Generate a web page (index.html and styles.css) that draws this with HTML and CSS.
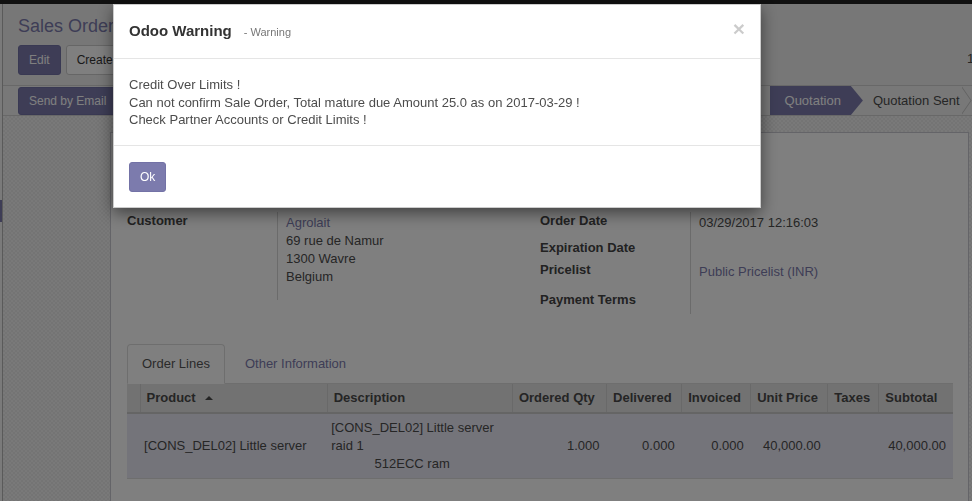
FILE: index.html
```html
<!DOCTYPE html>
<html lang="en">
<head>
<meta charset="utf-8">
<title>Sales Order - Odoo</title>
<link rel="stylesheet" href="styles.css">
</head>
<body>
<div class="navbar"></div>
<div class="app">
  <aside class="sidebar"><div class="sb-active"></div></aside>
  <main class="main">
    <div class="cp">
      <ol class="breadcrumb"><li><a class="crumb-link">Sales Orders</a></li><li class="active">SO034</li></ol>
      <div class="cp-row">
        <div class="cp-buttons">
          <button class="btn btn-primary">Edit</button>
          <button class="btn btn-default">Create</button>
        </div>
        <div class="pager">1 / 1</div>
      </div>
    </div>
    <div class="form-bg">
      <div class="statusbar">
        <div class="sb-buttons">
          <button class="btn btn-primary sb-btn">Send by Email</button>
          <button class="btn btn-default sb-btn">Print</button>
          <button class="btn btn-default sb-btn">Confirm Sale</button>
          <button class="btn btn-default sb-btn">Cancel</button>
        </div>
        <div class="states">
          <span class="state active">Quotation</span>
          <span class="state">Quotation Sent</span>
          <span class="state">Sales Order</span>
        </div>
      </div>
      <div class="sheet-wrap">
        <div class="sheet">
          <div class="sheet-head"><h1 class="so-title">SO034</h1></div>
          <div class="groups">
            <div class="group">
              <div class="g-row h-cust">
                <div class="g-label">Customer</div>
                <div class="g-value"><a class="link">Agrolait</a><br>69 rue de Namur<br>1300 Wavre<br>Belgium</div>
              </div>
            </div>
            <div class="group">
              <div class="g-row h-r1">
                <div class="g-label">Order Date</div>
                <div class="g-value">03/29/2017 12:16:03</div>
              </div>
              <div class="g-row h-r2">
                <div class="g-label">Expiration Date</div>
                <div class="g-value"></div>
              </div>
              <div class="g-row h-r3">
                <div class="g-label">Pricelist</div>
                <div class="g-value"><a class="link">Public Pricelist (INR)</a></div>
              </div>
              <div class="g-row h-r4">
                <div class="g-label">Payment Terms</div>
                <div class="g-value"></div>
              </div>
            </div>
          </div>
          <div class="notebook">
            <ul class="tabs">
              <li class="tab active">Order Lines</li>
              <li class="tab">Other Information</li>
            </ul>
            <table class="lines">
              <colgroup>
                <col class="c-handle"><col class="c-product"><col class="c-desc"><col class="c-qty"><col class="c-del"><col class="c-inv"><col class="c-price"><col class="c-tax"><col class="c-sub">
              </colgroup>
              <thead>
                <tr>
                  <th></th>
                  <th class="sorted">Product</th>
                  <th>Description</th>
                  <th>Ordered Qty</th>
                  <th>Delivered</th>
                  <th>Invoiced</th>
                  <th>Unit Price</th>
                  <th>Taxes</th>
                  <th>Subtotal</th>
                </tr>
              </thead>
              <tbody>
                <tr>
                  <td></td>
                  <td>[CONS_DEL02] Little server</td>
                  <td class="desc">[CONS_DEL02] Little server raid 1
            512ECC ram</td>
                  <td class="num">1.000</td>
                  <td class="num">0.000</td>
                  <td class="num">0.000</td>
                  <td class="num">40,000.00</td>
                  <td></td>
                  <td class="num">40,000.00</td>
                </tr>
              </tbody>
            </table>
          </div>
        </div>
      </div>
    </div>
  </main>
</div>

<div class="backdrop"></div>
<div class="modal">
  <div class="modal-header">
    <h4 class="modal-title">Odoo Warning<span class="subtitle">- Warning</span></h4>
    <button class="close">&times;</button>
  </div>
  <div class="modal-body">
    <div>Credit Over Limits !</div>
    <div>Can not confirm Sale Order, Total mature due Amount 25.0 as on 2017-03-29 !</div>
    <div>Check Partner Accounts or Credit Limits !</div>
  </div>
  <div class="modal-footer">
    <button class="btn btn-primary">Ok</button>
  </div>
</div>
</body>
</html>
```

FILE: styles.css
```css
* { box-sizing: border-box; }
html, body { margin: 0; padding: 0; }
body {
  width: 972px;
  height: 501px;
  overflow: hidden;
  font-family: "Liberation Sans", Arial, Helvetica, sans-serif;
  font-size: 13px;
  line-height: 18px;
  color: #4c4c4c;
  background: #f0f0f0;
}

.navbar { height: 4px; background: #222; }

.app { display: flex; height: 497px; overflow: hidden; isolation: isolate; }

.sidebar {
  width: 3px;
  flex: none;
  background: #f4f4f4;
  border-right: 1px solid #b4b4b4;
  padding-top: 196px;
}
.sb-active { width: 2px; height: 22px; background: #7c7bad; }

.main { flex: 1; min-width: 0; display: flex; flex-direction: column; }

/* control panel */
.cp {
  background: #efefef;
  border-bottom: 1px solid #d0d0d0;
  padding: 9px 15px 10px;
}
.breadcrumb {
  margin: 0; padding: 0; list-style: none;
  display: flex;
  font-size: 18px; line-height: 26px; height: 26px;
}
.breadcrumb li + li:before { content: "/"; padding: 0 6px; color: #ccc; }
.crumb-link { color: #7c7bad; text-decoration: none; }
.breadcrumb .active { color: #777; }

.cp-row { display: flex; align-items: center; margin-top: 6px; }
.cp-buttons { display: flex; }
.pager {
  margin-left: auto;
  margin-right: -90px;
  width: 80px;
  padding-bottom: 3px;
  color: #4c4c4c;
  white-space: nowrap;
}

.btn {
  font-family: inherit;
  font-size: 12px;
  line-height: 18px;
  padding: 5px 10px;
  border: 1px solid transparent;
  border-radius: 3px;
  margin: 0 5px 0 0;
  white-space: nowrap;
}
.btn-primary { background: #7c7bad; border-color: #7372a6; color: #fff; }
.btn-default { background: #fff; border-color: #ccc; color: #333; }

/* form background */
.form-bg {
  flex: 1;
  background-color: #ededed;
  background-image: conic-gradient(#f3f3f3 25%, #e8e8e8 0 50%, #f3f3f3 0 75%, #e8e8e8 0);
  background-size: 4px 4px;
}

.statusbar {
  display: flex;
  height: 30px;
  background: #f1f1f1;
  border-bottom: 1px solid #d0d0d0;
  padding-left: 15px;
}
.sb-buttons { display: flex; align-items: flex-start; }
.sb-btn { padding: 4px 10px; margin-top: 1px; margin-right: 4px; }

.states { display: flex; margin-left: auto; margin-right: -83px; }
.state {
  position: relative;
  display: flex;
  align-items: center;
  height: 29px;
  padding: 0 2px 0 22px;
  color: #4c4c4c;
  white-space: nowrap;
}
.state:before, .state:after {
  content: "";
  position: absolute;
  top: 0;
  width: 10px;
  height: 29px;
  clip-path: polygon(0 0, 100% 50%, 0 100%);
  z-index: 1;
}
.state:before { left: 100%; background: #c4c4c4; }
.state:after { left: calc(100% - 1px); background: #f1f1f1; }
.state.active {
  background: #7c7bad;
  color: #fff;
  padding: 0 10px 0 15px;
}
.state.active:before { display: none; }
.state.active:after { left: 100%; width: 12px; background: #7c7bad; z-index: 2; }

/* sheet */
.sheet-wrap { padding: 16px 0 0 107px; }
.sheet {
  width: 859px;
  min-height: 400px;
  background: #fff;
  border: 1px solid #c8c8d0;
  padding: 0 15px 0 16px;
}
.sheet-head { height: 79px; padding-top: 14px; }
.so-title { margin: 0; font-size: 26px; line-height: 32px; color: #4c4c4c; font-weight: normal; }

.groups { display: grid; grid-template-columns: 1fr 1fr; align-items: start; }
.g-row { display: grid; grid-template-columns: 151px 1fr; }
.g-label {
  font-weight: bold;
  color: #444;
  border-right: 1px solid #d6d6d6;
  white-space: nowrap;
}
.g-value { padding: 2px 0 0 8px; }
.h-cust { height: 88px; }
.h-r1 { height: 27px; }
.h-r2 { height: 22px; }
.h-r3 { height: 30px; }
.h-r4 { height: 23px; }

.link { color: #7c7bad; text-decoration: none; }

/* notebook */
.notebook { margin-top: 30px; }
.tabs {
  display: flex;
  list-style: none;
  margin: 0; padding: 0;
  border-bottom: 1px solid #ddd;
}
.tab {
  padding: 10px 14px;
  line-height: 18px;
  border: 1px solid transparent;
  border-radius: 4px 4px 0 0;
  margin: 0 5px -1px 0;
  color: #7c7bad;
}
.tab.active {
  color: #555;
  background: #fff;
  border-color: #ddd #ddd transparent;
}

.lines { width: 100%; border-collapse: collapse; table-layout: fixed; }
.c-handle { width: 13px; }
.c-product { width: 187px; }
.c-desc { width: 185px; }
.c-qty { width: 94px; }
.c-del { width: 75px; }
.c-inv { width: 69px; }
.c-price { width: 77px; }
.c-tax { width: 51px; }
.c-sub { width: 74px; }

.lines th {
  background: #e4e4e4;
  text-align: left;
  font-weight: bold;
  color: #4a4a4a;
  padding: 5px 5px 5px 6px;
  line-height: 18px;
  border-bottom: 2px solid #cbcbcb;
  border-left: 1px solid #d2d2d2;
  white-space: nowrap;
  overflow: hidden;
}
.lines th:first-child { border-left: none; }
.sorted:after {
  content: "";
  display: inline-block;
  margin-left: 9px;
  vertical-align: 2px;
  border-left: 4px solid transparent;
  border-right: 4px solid transparent;
  border-bottom: 4px solid #4a4a4a;
}
.lines tbody tr { background: #e9e9f5; }
.lines td {
  padding: 5px 4px;
  line-height: 18px;
  vertical-align: middle;
  border-bottom: 1px solid #dcdcdc;
}
.lines td.desc { white-space: pre-wrap; }
.lines td.num { text-align: right; padding-right: 7px; }

/* modal */
.backdrop {
  position: fixed;
  inset: 0;
  z-index: 100;
  background: rgba(0, 0, 0, 0.5);
}
.modal {
  position: fixed;
  left: 113px;
  top: 4px;
  z-index: 101;
  width: 648px;
  background: #fff;
  border: 1px solid rgba(0, 0, 0, 0.2);
  box-shadow: 0 5px 15px rgba(0, 0, 0, 0.5);
}
.modal-header {
  display: flex;
  align-items: flex-start;
  padding: 15px;
  border-bottom: 1px solid #e5e5e5;
}
.modal-title {
  margin: 0;
  font-size: 15px;
  line-height: 22px;
  font-weight: bold;
  color: #333;
}
.subtitle {
  margin-left: 12px;
  font-size: 11px;
  font-weight: normal;
  color: #777;
}
.close {
  margin-left: auto;
  margin-top: -2px;
  padding: 0;
  background: none;
  border: 0;
  font-family: inherit;
  font-size: 21px;
  font-weight: bold;
  line-height: 1;
  color: #000;
  opacity: 0.2;
}
.modal-body {
  padding: 17px 15px 16px;
  line-height: 17.5px;
  color: #4c4c4c;
}
.modal-footer {
  border-top: 1px solid #e5e5e5;
  padding: 16px 15px 15px;
  display: flex;
}
```
